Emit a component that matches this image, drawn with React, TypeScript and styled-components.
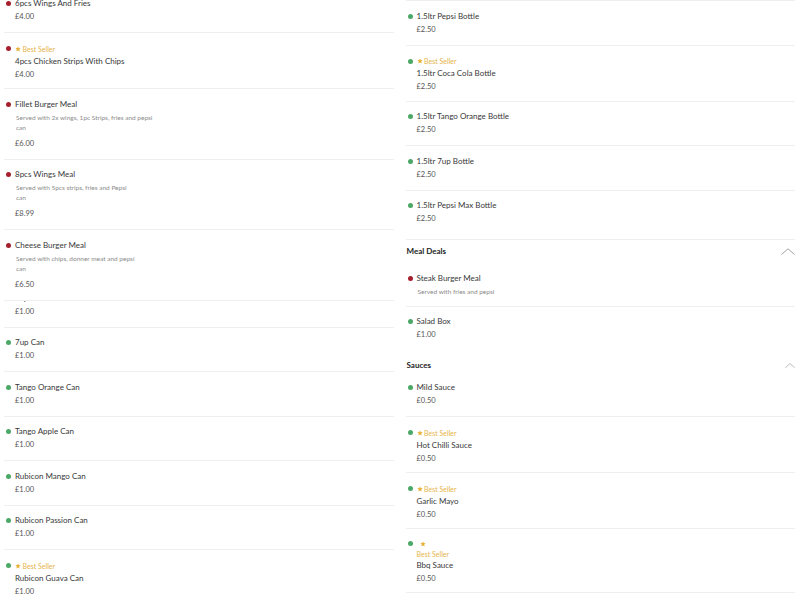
import styled, { createGlobalStyle } from 'styled-components';

type MenuItem = {
  name: string;
  price?: string;
  desc?: string;
  veg?: boolean;
  bestSeller?: boolean;
  stacked?: boolean;
  extra?: number;
  noBorder?: boolean;
  overlap?: number;
  raised?: boolean;
};

type Block =
  | { kind: 'item'; item: MenuItem }
  | { kind: 'header'; title: string; chevron: number; after: number };

const item = (i: MenuItem): Block => ({ kind: 'item', item: i });

const leftColumn: Block[] = [
  item({ name: '6pcs Wings And Fries', price: '£4.00' }),
  item({ name: '4pcs Chicken Strips With Chips', price: '£4.00', bestSeller: true }),
  item({ name: 'Fillet Burger Meal', price: '£6.00', desc: 'Served with 2x wings, 1pc Strips, fries and pepsi\ncan' }),
  item({ name: '8pcs Wings Meal', price: '£8.99', desc: 'Served with 5pcs strips, fries and Pepsi\ncan' }),
  item({ name: 'Cheese Burger Meal', price: '£6.50', desc: 'Served with chips, donner meat and pepsi\ncan', raised: true }),
  item({ name: 'Pepsi Can', price: '£1.00', veg: true, overlap: 17.5 }),
  item({ name: '7up Can', price: '£1.00', veg: true }),
  item({ name: 'Tango Orange Can', price: '£1.00', veg: true }),
  item({ name: 'Tango Apple Can', price: '£1.00', veg: true }),
  item({ name: 'Rubicon Mango Can', price: '£1.00', veg: true }),
  item({ name: 'Rubicon Passion Can', price: '£1.00', veg: true }),
  item({ name: 'Rubicon Guava Can', price: '£1.00', veg: true, bestSeller: true }),
];

const rightColumn: Block[] = [
  item({ name: '1.5ltr Pepsi Bottle', price: '£2.50', veg: true }),
  item({ name: '1.5ltr Coca Cola Bottle', price: '£2.50', veg: true, bestSeller: true }),
  item({ name: '1.5ltr Tango Orange Bottle', price: '£2.50', veg: true }),
  item({ name: '1.5ltr 7up Bottle', price: '£2.50', veg: true }),
  item({ name: '1.5ltr Pepsi Max Bottle', price: '£2.50', veg: true, extra: 4.5 }),
  { kind: 'header', title: 'Meal Deals', chevron: 14, after: 5.5 },
  item({ name: 'Steak Burger Meal', desc: 'Served with fries and pepsi' }),
  item({ name: 'Salad Box', price: '£1.00', veg: true, noBorder: true, extra: 4 }),
  { kind: 'header', title: 'Sauces', chevron: 10, after: 0.5 },
  item({ name: 'Mild Sauce', price: '£0.50', veg: true }),
  item({ name: 'Hot Chilli Sauce', price: '£0.50', veg: true, bestSeller: true }),
  item({ name: 'Garlic Mayo', price: '£0.50', veg: true, bestSeller: true }),
  item({ name: 'Bbq Sauce', price: '£0.50', veg: true, bestSeller: true, stacked: true }),
];

const Star = () => (
  <svg width="6" height="6" viewBox="0 0 24 24">
    <path
      d="M12 1.5l3.1 6.9 7.4.7-5.6 5 1.7 7.4L12 17.6l-6.6 3.9 1.7-7.4-5.6-5 7.4-.7z"
      fill="#e8b13a"
    />
  </svg>
);

const Chevron = ({ size }: { size: number }) => (
  <svg width={size} height={size / 2} viewBox="0 0 14 7">
    <polyline points="0.5,6.5 7,0.8 13.5,6.5" fill="none" stroke="#9a9a9a" strokeWidth="0.9" />
  </svg>
);

const ItemRow = ({ item }: { item: MenuItem }) => {
  const stacked = !!item.stacked;
  return (
    <Row
      $extra={item.extra ?? 0}
      $noBorder={!!item.noBorder}
      $overlap={item.overlap ?? 0}
      $raised={!!item.raised}
      $badge={!!item.bestSeller}
    >
      {item.bestSeller ? (
        <>
          <Head $stacked={stacked}>
            <Dot $veg={!!item.veg} $stacked={stacked} />
            <Badge $stacked={stacked}>
              <StarBox>
                <Star />
              </StarBox>
              <BadgeLabel $stacked={stacked}>Best Seller</BadgeLabel>
            </Badge>
          </Head>
          <Title $indent>{item.name}</Title>
        </>
      ) : (
        <Head>
          <Dot $veg={!!item.veg} />
          <Title>{item.name}</Title>
        </Head>
      )}
      {item.desc && <Desc $last={!item.price}>{item.desc}</Desc>}
      {item.price && <Price>{item.price}</Price>}
    </Row>
  );
};

const renderBlock = (b: Block, idx: number) =>
  b.kind === 'item' ? (
    <ItemRow key={idx} item={b.item} />
  ) : (
    <CategoryHeader key={idx} $after={b.after}>
      <span>{b.title}</span>
      <Chevron size={b.chevron} />
    </CategoryHeader>
  );

export default function App() {
  return (
    <>
      <GlobalStyle />
      <Page>
        <Column $offset={-11.5}>{leftColumn.map(renderBlock)}</Column>
        <Column $offset={0} $topRule>
          {rightColumn.map(renderBlock)}
        </Column>
      </Page>
    </>
  );
}

const GlobalStyle = createGlobalStyle`
  body {
    margin: 0;
    background: #fff;
    font-family: Lato, 'Liberation Sans', sans-serif;
  }
`;

const Page = styled.div`
  display: grid;
  grid-template-columns: 1fr 1fr;
  column-gap: 12px;
  align-items: start;
  padding: 0 5px 0 4px;
  height: 600px;
  overflow: hidden;
`;

const Column = styled.div<{ $offset: number; $topRule?: boolean }>`
  display: flex;
  flex-direction: column;
  margin-top: ${({ $offset }) => $offset}px;
  border-top: ${({ $topRule }) => ($topRule ? '1px solid #efefef' : 'none')};
`;

const Row = styled.div<{
  $extra: number;
  $noBorder: boolean;
  $overlap: number;
  $raised: boolean;
  $badge: boolean;
}>`
  position: relative;
  z-index: ${({ $raised }) => ($raised ? 1 : 0)};
  background: #fff;
  padding-top: ${({ $badge }) => ($badge ? 9.5 : 8.5)}px;
  padding-bottom: ${({ $badge, $extra }) => ($badge ? 7.5 : 9) + $extra}px;
  margin-top: ${({ $overlap }) => -$overlap}px;
  border-bottom: ${({ $noBorder }) => ($noBorder ? 'none' : '1px solid #efefef')};
`;

const Head = styled.div<{ $stacked?: boolean }>`
  display: flex;
  align-items: ${({ $stacked }) => ($stacked ? 'flex-start' : 'center')};
  gap: 4px;
`;

const Dot = styled.span<{ $veg: boolean; $stacked?: boolean }>`
  width: 5px;
  height: 5px;
  border-radius: 50%;
  flex-shrink: 0;
  margin-left: 2px;
  margin-top: ${({ $stacked }) => ($stacked ? '2.5px' : '0')};
  background: ${({ $veg }) => ($veg ? '#4ba866' : '#a51f2d')};
`;

const Badge = styled.div<{ $stacked: boolean }>`
  display: flex;
  flex-direction: ${({ $stacked }) => ($stacked ? 'column' : 'row')};
  align-items: ${({ $stacked }) => ($stacked ? 'flex-start' : 'center')};
  gap: ${({ $stacked }) => ($stacked ? '0' : '1.5px')};
  height: ${({ $stacked }) => ($stacked ? '20px' : '12px')};
  margin-left: ${({ $stacked }) => ($stacked ? '3px' : '0')};
`;

const StarBox = styled.span`
  display: flex;
  align-items: center;
  height: 10px;
`;

const BadgeLabel = styled.span<{ $stacked: boolean }>`
  font-size: 7px;
  line-height: 10px;
  color: #e6b449;
  margin-left: ${({ $stacked }) => ($stacked ? '-3px' : '0')};
`;

const Title = styled.div<{ $indent?: boolean }>`
  font-size: 8px;
  line-height: 13px;
  color: #383838;
  padding-left: ${({ $indent }) => ($indent ? '11px' : '0')};
`;

const Desc = styled.div<{ $last: boolean }>`
  font-size: 6.5px;
  line-height: 10px;
  color: #8c8c8c;
  white-space: pre-line;
  padding-left: 12px;
  margin: 2px 0 ${({ $last }) => ($last ? '0' : '5px')};
`;

const Price = styled.div`
  font-size: 7.5px;
  line-height: 12px;
  color: #555;
  padding-left: 11px;
  margin-top: 1px;
`;

const CategoryHeader = styled.div<{ $after: number }>`
  display: flex;
  align-items: center;
  justify-content: space-between;
  padding: 5px 0 ${({ $after }) => $after}px 1px;
  font-size: 8px;
  line-height: 13px;
  font-weight: 700;
  color: #222;
`;
